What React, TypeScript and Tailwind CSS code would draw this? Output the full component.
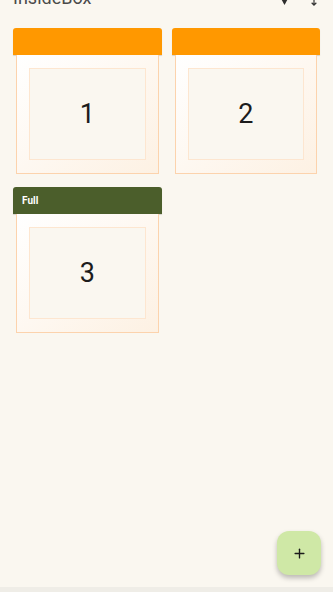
import { Plus } from 'lucide-react';

type Box = { id: number; label?: string; full?: boolean };

const boxes: Box[] = [{ id: 1 }, { id: 2 }, { id: 3, label: 'Full', full: true }];

function BoxCard({ box }: { box: Box }) {
  return (
    <div className="flex flex-col">
      <div
        className={`flex h-[27px] items-center rounded-t-[3px] px-[9px] text-[10px] font-bold text-white shadow-[0_1px_1px_rgba(0,0,0,0.15)] ${
          box.full ? 'bg-[#4b5e2b]' : 'bg-[#ff9800]'
        }`}
      >
        {box.label}
      </div>
      <div className="mx-[3px] flex h-[119px] flex-col border border-t-0 border-[#fcd3ad] bg-gradient-to-br from-white to-[#fdf1e3] px-[12px] pb-[13px] pt-[13px]">
        <div className="flex flex-1 items-center justify-center border border-[#fde6d0] bg-[#faf7f0] text-[27px] font-normal text-[#1c1c1c]">
          {box.id}
        </div>
      </div>
    </div>
  );
}

export default function App() {
  return (
    <div className="relative h-[592px] overflow-hidden bg-[#faf7f0] font-['Roboto',sans-serif]">
      <div className="-mt-[26px] flex h-[48px] items-center pl-[13px] pr-[12px]">
        <span className="flex-1 text-[18px] leading-none text-[#4a4a4a]">InsideBox</span>
        <svg width="12" height="14" viewBox="0 0 12 14" className="mr-[16px] translate-y-[1px] text-[#2e2e2e]">
          <path d="M0 3h11l-5.5 10z" fill="currentColor" />
        </svg>
        <svg width="14" height="14" viewBox="0 0 24 24" className="translate-y-[3px] text-[#333]" fill="none" stroke="currentColor" strokeWidth="2">
          <path d="M12 2v17M8 15l4 4 4-4" />
        </svg>
      </div>
      <div className="grid grid-cols-2 gap-x-[10px] gap-y-[13px] px-[13px] pt-[6px]">
        {boxes.map((b) => (
          <BoxCard key={b.id} box={b} />
        ))}
      </div>
      <button className="absolute bottom-[17px] right-[12px] flex h-[44px] w-[44px] items-center justify-center rounded-[12px] bg-[#cfe8a6] shadow-[0_3px_5px_rgba(0,0,0,0.25)]">
        <Plus size={15} strokeWidth={2.2} className="text-[#1b1b1b]" />
      </button>
      <div className="absolute bottom-0 left-0 h-[5px] w-full bg-[#efede7]" />
    </div>
  );
}
